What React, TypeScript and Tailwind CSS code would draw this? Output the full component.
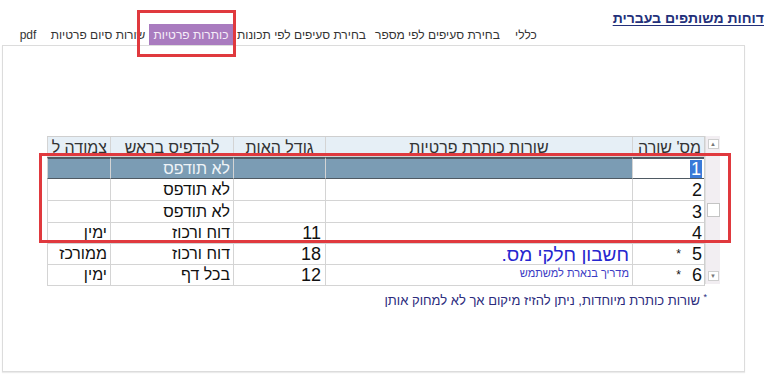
const tabs = [
  { label: "כללי", w: "w-[40px]" },
  { label: "בחירת סעיפים לפי מספר", w: "w-[137px]" },
  { label: "בחירת סעיפים לפי תכונות", w: "w-[135px]" },
  { label: "כותרות פרטיות", w: "w-[86px]", active: true },
  { label: "שורות סיום פרטיות", w: "w-[100px]" },
  { label: "pdf", w: "w-[40px]" },
];

type Row = {
  num: string;
  star?: boolean;
  title?: string;
  titleKind?: "big" | "small";
  size: string;
  print: string;
  align: string;
  h: string;
};

const rows: Row[] = [
  { num: "1", size: "", print: "לא תודפס", align: "", h: "h-[22px]" },
  { num: "2", size: "", print: "לא תודפס", align: "", h: "h-[22px]" },
  { num: "3", size: "", print: "לא תודפס", align: "", h: "h-[22px]" },
  { num: "4", size: "11", print: "דוח ורכוז", align: "ימין", h: "h-[21px]" },
  { num: "5", star: true, title: "חשבון חלקי מס.", titleKind: "big", size: "18", print: "דוח ורכוז", align: "ממורכז", h: "h-[21px]" },
  { num: "6", star: true, title: "מדריך בנארת למשתמש", titleKind: "small", size: "12", print: "בכל דף", align: "ימין", h: "h-[21px]" },
];

const cell = "border-l border-b border-[#d4d4d4] overflow-hidden whitespace-nowrap";

const Scrollbar = () => (
  <div className="w-[15px] h-[148px] bg-[#f2eef2] flex flex-col items-center justify-between py-[3px] border-l border-[#e0e0e0]">
    <div className="w-[11px] h-[10px] bg-white border border-[#cfcfcf] flex items-center justify-center text-[6px] leading-none text-[#777]">▲</div>
    <div className="w-[13px] h-[14px] bg-white border border-[#c4c4c4] mt-[50px]" />
    <div className="w-[11px] h-[10px] bg-white border border-[#cfcfcf] flex items-center justify-center text-[6px] leading-none text-[#777] mt-[50px]">▼</div>
  </div>
);

const HeaderTable = () => (
  <div className="grid grid-cols-[72px_307px_92px_123px_63px] border-t border-r border-[#cfcfcf] text-[#333]">
    {["מס' שורה", "שורות כותרת פרטיות", "גודל האות", "להדפיס בראש", "צמודה ל"].map((h, i) => (
      <div
        key={h}
        className={`${cell} h-[20px] bg-[#e6eff6] text-[16px] leading-[22px] px-[3px] ${i === 0 || i === 4 ? "text-right" : "text-center"}`}
      >
        {h}
      </div>
    ))}
    {rows.map((r, i) => {
      const sel = i === 0;
      const selBg = sel ? "bg-[#7b9cb4] border-t-2 border-t-[#4f5a63] border-b-[#4f5a63]" : "bg-white";
      return [
        <div
          key={`n${i}`}
          className={`${cell} ${r.h} bg-white ${sel ? "border-t-2 border-t-[#4f5a63] border-b-[#4f5a63]" : ""} flex items-center gap-[11px] pr-[2px] text-[18px] leading-none text-[#111]`}
        >
          {sel ? <span className="bg-[#3a7ad8] text-white px-[1px]">{r.num}</span> : <span>{r.num}</span>}
          {r.star && <span className="text-[12px] self-start mt-[4px]">*</span>}
        </div>,
        <div key={`t${i}`} className={`${cell} ${r.h} ${selBg} flex pr-[3px] text-[#2626cf]`}>
          {r.titleKind === "big" && <span className="text-[19px] leading-[21px]">{r.title}</span>}
          {r.titleKind === "small" && <span className="text-[11px] leading-[16px] text-[#3b3bc4]">{r.title}</span>}
        </div>,
        <div key={`s${i}`} className={`${cell} ${r.h} ${selBg} flex items-center pr-[4px] text-[18px] leading-none text-[#111]`}>
          {r.size}
        </div>,
        <div key={`p${i}`} className={`${cell} ${r.h} ${selBg} flex items-center pr-[3px] text-[16px] leading-none ${sel ? "text-[#eef3f7]" : "text-[#111]"}`}>
          {r.print}
        </div>,
        <div key={`a${i}`} className={`${cell} ${r.h} ${selBg} flex items-center pr-[3px] text-[16px] leading-none text-[#111]`}>
          {r.align}
        </div>,
      ];
    })}
  </div>
);

export default function App() {
  return (
    <div dir="rtl" className="relative w-[768px] h-[379px] bg-white overflow-hidden font-['Liberation_Sans',Arial,sans-serif]">
      <div className="pt-[6px] pr-[4px] h-[24px]">
        <span className="font-bold text-[14px] leading-[18px] underline underline-offset-2 text-[#23307a]">דוחות משותפים בעברית</span>
      </div>
      <div className="flex mr-[222px] h-[21px] text-[12px] text-[#333]">
        {tabs.map((t) => (
          <div key={t.label} className={`${t.w} flex items-center justify-center whitespace-nowrap`}>
            {t.active ? (
              <span className="bg-[#a97bbf] text-[#f6eef9] h-[21px] w-[84px] flex items-center justify-center">{t.label}</span>
            ) : (
              t.label
            )}
          </div>
        ))}
      </div>
      <div className="mr-[23px] ml-[2px] h-[327px] border border-[#dcdcdc] shadow-[0_1px_1px_rgba(0,0,0,0.08)] pt-[90px] pr-[24px]">
        <div className="flex">
          <Scrollbar />
          <HeaderTable />
        </div>
        <div className="mr-[13px] mt-[5px] text-[13px] text-[#2b2b7d]">
          <span className="text-[9px] align-top">*</span> שורות כותרת מיוחדות, ניתן להזיז מיקום אך לא למחוק אותן
        </div>
      </div>
      <div className="absolute left-[137px] top-[10px] w-[99px] h-[47px] border-[3px] border-[#e0393e]" />
      <div className="absolute left-[39px] top-[153px] w-[692px] h-[90px] border-[3px] border-[#e0393e]" />
    </div>
  );
}
